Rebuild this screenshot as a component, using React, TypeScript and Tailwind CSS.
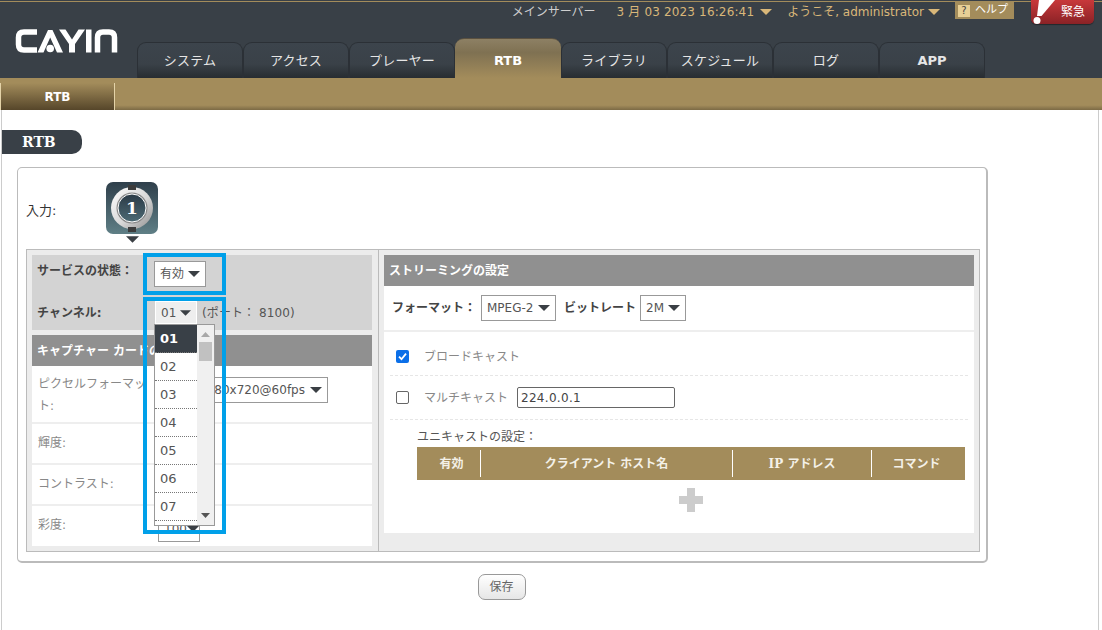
import React from "react";

const SANS = "font-['DejaVu_Sans','Noto_Sans_CJK_JP',sans-serif]";

function Tri({ color = "#3a3f44", w = 12, h = 6 }: { color?: string; w?: number; h?: number }) {
  return (
    <svg width={w} height={h} viewBox="0 0 12 6" className="shrink-0">
      <polygon points="0,0 12,0 6,6" fill={color} />
    </svg>
  );
}

function Logo() {
  return (
    <svg width="103" height="24" viewBox="0 0 103 24">
      <path d="M22 3 H9 Q3.5 3 3.5 8.5 V15.5 Q3.5 21 9 21 H22" fill="none" stroke="#fff" strokeWidth="5.5" />
      <path d="M22.5 23.5 L33 1 H37.5 L48 23.5 H42 L35.2 8.5 L28.5 23.5 Z" fill="#fff" />
      <circle cx="35.2" cy="19.5" r="3.8" fill="#fff" />
      <path d="M44 0.5 H50.5 L57 10.5 L63.5 0.5 H70 L60 15 V23.5 H54 V15 Z" fill="#fff" />
      <rect x="71" y="0.5" width="5.5" height="23" fill="#fff" />
      <path d="M82.5 23.5 V8.5 Q82.5 3 88 3 H94 Q99.5 3 99.5 8.5 V23.5" fill="none" stroke="#fff" strokeWidth="5.5" />
    </svg>
  );
}

function InputIcon() {
  return (
    <svg width="52" height="52" viewBox="0 0 52 52">
      <defs>
        <linearGradient id="ibg" x1="0" y1="0" x2="0" y2="1">
          <stop offset="0" stopColor="#2f3f4b" />
          <stop offset="1" stopColor="#5f7f86" />
        </linearGradient>
        <linearGradient id="iring" x1="0" y1="0" x2="1" y2="1">
          <stop offset="0" stopColor="#ffffff" />
          <stop offset="0.55" stopColor="#d8d8d8" />
          <stop offset="1" stopColor="#8f8f8f" />
        </linearGradient>
        <linearGradient id="iin" x1="0" y1="0" x2="0" y2="1">
          <stop offset="0" stopColor="#2b3a46" />
          <stop offset="1" stopColor="#4d6a74" />
        </linearGradient>
      </defs>
      <rect width="52" height="52" rx="7" fill="url(#ibg)" />
      <circle cx="26" cy="26" r="21" fill="url(#iring)" />
      <circle cx="26" cy="26" r="15.5" fill="#8a8a8a" />
      <circle cx="26" cy="26" r="14" fill="url(#iin)" stroke="#fff" strokeWidth="1" />
      <rect x="22" y="3" width="8" height="5" fill="#3c3c3c" />
      <rect x="22" y="45" width="8" height="5" fill="#3c3c3c" />
      <text x="26" y="32" textAnchor="middle" fontFamily="'DejaVu Serif',serif" fontWeight="700" fontSize="17" fill="#fff">1</text>
    </svg>
  );
}

function Select({ value, className = "" }: { value: string; className?: string }) {
  return (
    <div className={`h-[26px] border border-[#999] bg-white flex items-center px-[5px] font-normal text-[12px] text-[#555] ${className}`}>
      <span>{value}</span>
      <Tri />
    </div>
  );
}

const tabs = ["システム", "アクセス", "プレーヤー", "RTB", "ライブラリ", "スケジュール", "ログ", "APP"];

function Tab({ label }: { label: string }) {
  const active = label === "RTB";
  const latin = label === "RTB" || label === "APP";
  return (
    <div
      className={
        "w-[106px] flex items-center justify-center text-[13px] " +
        (latin ? "font-bold text-[12px] " : "tracking-[0.2px] ") +
        (active
          ? "h-[40px] pt-[4px] rounded-t-[9px] text-white bg-[linear-gradient(#8d8064_0%,#7f7152_35%,#a38c5b_100%)] border-t border-[#5b5140]"
          : "h-[36px] rounded-t-[9px] text-[#e6e6e6] bg-[linear-gradient(#3c444c_0%,#3a4148_60%,#272c31_100%)] border border-b-0 border-[#2b3036]")
      }
    >
      {label}
    </div>
  );
}

function Header() {
  return (
    <header className="h-[78px] bg-[#394047] flex relative">
      <div className="absolute left-0 right-0 top-px h-px bg-[#a38c5b]" />
      <div className="w-[137px] pl-[15px] pt-[29px] shrink-0">
        <Logo />
      </div>
      <div className="flex-1 flex flex-col justify-between">
        <div className="flex items-start h-[24px] pr-[8px] justify-end text-[12px]">
          <span className="text-[#cfcfcf] mt-[3px] mr-[21px]">メインサーバー</span>
          <span className="text-[#d9b779] mt-[3px] flex items-center gap-[6px] mr-[15px] tracking-[0.15px]">
            3 月 03 2023 16:26:41 <Tri color="#d9b779" />
          </span>
          <span className="text-[#d9b779] mt-[3px] flex items-center gap-[4px] mr-[15px]">
            ようこそ, administrator <Tri color="#d9b779" />
          </span>
          <span className="bg-[#a38c5b] mt-[2px] h-[17px] w-[59px] flex items-center pl-[3px] gap-[5px] mr-[17px] text-[11px] text-white">
            <span className="w-[12px] h-[12px] bg-[#e8cf95] text-[#444] flex items-center justify-center text-[10px]">?</span>
            ヘルプ
          </span>
          <div className="w-[63px] h-[24px] rounded-b-[5px] bg-[linear-gradient(#c8383a,#8a2226)] flex items-center relative shadow-[0_1px_1px_rgba(0,0,0,0.4)]">
            <svg width="28" height="24" viewBox="0 0 28 24" className="absolute left-0 top-0">
              <polygon points="8,0 24,0 10.5,16 6,16" fill="#fff" />
              <circle cx="6" cy="20.5" r="3.5" fill="#fff" />
            </svg>
            <span className="absolute left-[30px] top-[3px] text-[12px] text-white">緊急</span>
          </div>
        </div>
        <nav className="flex items-end">
          {tabs.map((t) => (
            <Tab key={t} label={t} />
          ))}
        </nav>
      </div>
    </header>
  );
}

function SubBar() {
  return (
    <div className="h-[32px] bg-[linear-gradient(#a38c5b_0%,#a38c5b_85%,#7c6a45_100%)] flex items-end">
      <div className="w-[115px] h-[27px] border-x border-[#e4d3a8] bg-[linear-gradient(#a38c5b,#56462a)] flex items-center justify-center text-[12px] font-bold text-white">
        RTB
      </div>
    </div>
  );
}

function LeftRow({ label, h, children, top = false }: { label: string; h: string; children: React.ReactNode; top?: boolean }) {
  return (
    <div className={`flex border-b-2 border-[#eeeeee] last:border-b-0 items-center ${h}`}>
      <div className={`w-[110px] ml-[6px] mr-[10px] leading-[22px] text-[12px] text-[#888] ${top ? "self-start mt-[7px]" : "-mt-[2px]"}`}>{label}</div>
      {children}
    </div>
  );
}

function LeftColumn() {
  return (
    <div className="w-[352px] shrink-0 p-[5px] pr-[6px] border-r border-[#bbb] flex flex-col">
      <div className="h-[76px] bg-[#d3d3d3] text-[12px] font-bold text-[#444] pl-[5px] relative">
        <div className="flex items-start h-[46px] pt-[6px]">
          <span className="w-[117px] mt-px">サービスの状態：</span>
          <Select value="有効" className="w-[52px] justify-between" />
        </div>
        <div className="flex items-center h-[23px]">
          <span className="w-[118px]">チャンネル:</span>
          <div className="w-[42px] h-[23px] bg-[#eeeeee] border border-white flex items-center justify-between px-[5px] font-normal text-[#555]">
            01 <Tri w={11} />
          </div>
          <span className="ml-[5px] font-normal text-[#555] tracking-[0.1px]">(ポート： 8100)</span>
        </div>
      </div>
      <div className="h-[31px] mt-[5px] bg-[#909090] text-[12px] font-bold text-white flex items-center pl-[5px]">
        キャプチャー カードの設定
      </div>
      <div className="bg-white flex-1 flex flex-col">
        <LeftRow label="ピクセルフォーマット:" h="h-[58px]" top>
          <Select value="1280x720@60fps" className="w-[170px] -mt-[8px] justify-end gap-[5px]" />
        </LeftRow>
        <LeftRow label="輝度:" h="h-[41px]">
          <Select value="100" className="w-[42px] justify-between" />
        </LeftRow>
        <LeftRow label="コントラスト:" h="h-[41px]">
          <Select value="100" className="w-[42px] justify-between" />
        </LeftRow>
        <LeftRow label="彩度:" h="h-[40px]">
          <Select value="100" className="w-[42px] mt-[5px] justify-between" />
        </LeftRow>
      </div>
    </div>
  );
}

function RightColumn() {
  return (
    <div className="flex-1 p-[5px] pb-[18px] flex flex-col">
      <div className="h-[31px] bg-[#909090] text-[12px] font-bold text-white flex items-center pl-[5px] shrink-0">
        ストリーミングの設定
      </div>
      <div className="bg-white flex-1 flex flex-col">
        <div className="h-[46px] border-b-2 border-[#eeeeee] flex items-center pl-[8px] text-[12px] font-bold text-[#444] shrink-0">
          <span className="w-[89px]">フォーマット：</span>
          <Select value="MPEG-2" className="w-[75px] justify-between" />
          <span className="ml-[8px] w-[76px]">ビットレート</span>
          <Select value="2M" className="w-[46px] justify-between" />
        </div>
        <div className="mx-[6px] h-[44px] pt-[6px] border-b border-dashed border-[#e6e6e6] flex items-center pl-[6px] text-[12px] text-[#888] shrink-0">
          <span className="w-[13px] h-[13px] rounded-[2px] bg-[#0b6fe8] flex items-center justify-center">
            <svg width="9" height="9" viewBox="0 0 9 9">
              <path d="M1 4.7 L3.5 7.2 L8 1.6" fill="none" stroke="#fff" strokeWidth="1.8" />
            </svg>
          </span>
          <span className="ml-[15px]">ブロードキャスト</span>
        </div>
        <div className="mx-[6px] h-[44px] border-b border-dashed border-[#e6e6e6] flex items-center pl-[6px] text-[12px] text-[#888] shrink-0">
          <span className="w-[13px] h-[13px] rounded-[2px] border border-[#666] bg-white" />
          <span className="ml-[15px] w-[93px]">マルチキャスト</span>
          <span className="w-[158px] h-[21px] border border-[#666] rounded-[2px] pl-[3px] flex items-center text-[#444] tracking-[0.3px]">224.0.0.1</span>
        </div>
        <div className="ml-[33px] mr-[9px] mt-[9px]">
          <div className="text-[12px] text-[#555] h-[18px] leading-[16px]">ユニキャストの設定：</div>
          <div className="h-[33px] bg-[#a38c5b] flex items-center text-[12px] font-bold text-[#f4f1e8] font-['DejaVu_Serif','Noto_Sans_CJK_JP',serif]">
            <div className="w-[64px] h-[27px] pl-[6px] border-r border-white flex items-center justify-center">有効</div>
            <div className="w-[252px] h-[27px] border-r border-white flex items-center justify-center">クライアント ホスト名</div>
            <div className="w-[139px] h-[27px] border-r border-white flex items-center justify-center">IP アドレス</div>
            <div className="flex-1 pr-[4px] flex items-center justify-center">コマンド</div>
          </div>
          <div className="flex justify-center mt-[8px]">
            <svg width="24" height="24" viewBox="0 0 24 24">
              <path d="M8 0 H16 V8 H24 V16 H16 V24 H8 V16 H0 V8 H8 Z" fill="#cccccc" />
            </svg>
          </div>
        </div>
      </div>
    </div>
  );
}

function Dropdown() {
  const items = ["01", "02", "03", "04", "05", "06", "07"];
  return (
    <div className="absolute left-[154px] top-[324px] w-[61px] h-[202px] border border-[#999] bg-white flex overflow-hidden text-[13px] text-[#555]">
      <div className="flex-1">
        {items.map((it, i) => (
          <div
            key={it}
            className={
              "h-[28px] pl-[5px] flex items-center border-b border-dotted border-[#777] " +
              (i === 0 ? "bg-[#394047] text-white font-bold" : "")
            }
          >
            {it}
          </div>
        ))}
      </div>
      <div className="w-[17px] bg-[#f0f0f0] relative">
        <svg width="9" height="5" viewBox="0 0 9 5" className="absolute left-[4px] top-[7px]">
          <polygon points="0,5 9,5 4.5,0" fill="#a8a8a8" />
        </svg>
        <div className="absolute left-[2px] top-[17px] w-[13px] h-[19px] bg-[#c1c1c1]" />
        <svg width="9" height="5" viewBox="0 0 9 5" className="absolute left-[4px] bottom-[7px]">
          <polygon points="0,0 9,0 4.5,5" fill="#555" />
        </svg>
      </div>
    </div>
  );
}

export default function App() {
  return (
    <div className={`w-[1102px] h-[630px] bg-white relative overflow-hidden ${SANS}`}>
      <Header />
      <SubBar />
      <main className="ml-px w-[1098px] h-[520px] border-x border-[#cccccc] pt-[20px]">
        <div className="w-[80px] h-[24px] bg-[#394047] rounded-r-[10px] flex items-center pl-[20px] text-[14px] font-bold text-white font-['DejaVu_Serif',serif]">
          RTB
        </div>
        <section className="ml-[15px] mt-[13px] w-[971px] h-[396px] border border-[#bbbbbb] border-r-2 border-b-2 rounded-[5px] pl-[8px] pt-[14px]">
          <div className="flex items-start h-[67px]">
            <span className="w-[80px] mt-[19px] text-[13px] text-[#333]">入力:</span>
            <div className="flex flex-col items-center">
              <InputIcon />
              <div className="mt-[2px]">
                <Tri w={13} h={7} />
              </div>
            </div>
          </div>
          <div className="w-[954px] h-[303px] border border-[#bbbbbb] bg-[#ececec] flex">
            <LeftColumn />
            <RightColumn />
          </div>
        </section>
        <div className="flex justify-center mt-[11px] pr-[97px]">
          <button className="w-[48px] h-[26px] rounded-[7px] border border-[#999] bg-[linear-gradient(#ffffff,#e6e6e6)] text-[12px] text-[#666]">
            保存
          </button>
        </div>
      </main>
      <Dropdown />
      <div className="absolute left-[143px] top-[253px] w-[83px] h-[42px] border-[4px] border-[#00a0e9]" />
      <div className="absolute left-[143px] top-[297px] w-[83px] h-[237px] border-[4px] border-[#00a0e9]" />
    </div>
  );
}
